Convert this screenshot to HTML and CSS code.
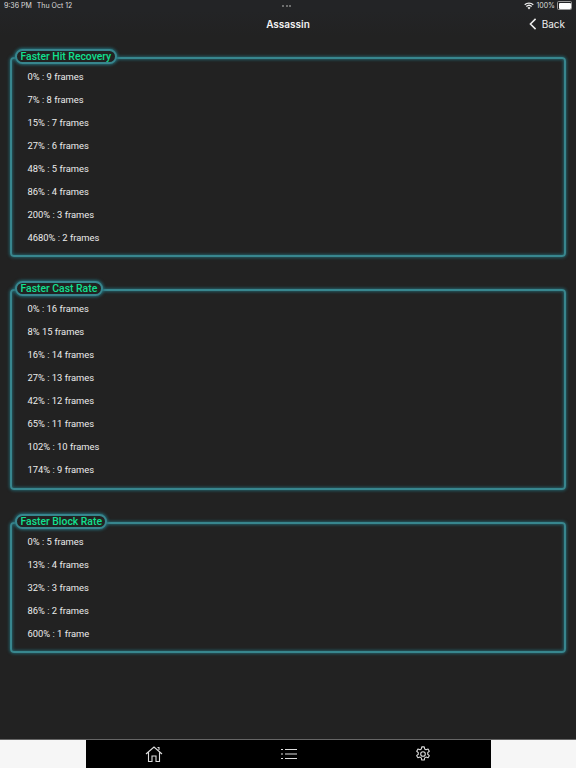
FILE: index.html
```html
<!doctype html>
<html lang="en-US">
<head>
	<meta charset="utf-8">
	<title>Assassin</title>
	<link rel="stylesheet" href="styles.css">
</head>
<body>
	<div class="app">
		<div class="status">
			<span>9:36 PM</span><span class="date">Thu Oct 12</span>
			<div class="dots"><b></b><b></b><b></b></div>
			<div class="status-r">
				<svg class="wifi" viewBox="0 0 16 12" width="10" height="8"><path d="M8 11.5 5.6 8.8a3.5 3.5 0 0 1 4.8 0zM4.5 7.6 3 6a7.2 7.2 0 0 1 10 0l-1.500 1.600a5 5 0 0 0-7 0zM1.900 4.900.4 3.300a11 11 0 0 1 15.200 0l-1.500 1.600a9 9 0 0 0-12.200 0z" fill="#eee"/></svg>
				<span>100%</span>
				<i class="batt"><b></b></i>
			</div>
		</div>
		<div class="nav">
			<span class="title">Assassin</span>
			<a class="back">
				<svg viewBox="0 0 9 14" width="8" height="12"><path d="M7.500 1 1.500 7l6 6" fill="none" stroke="#eee" stroke-width="1.800"/></svg>
				<span>Back</span>
			</a>
		</div>
		<div class="main">
			<div class="panel">
				<div class="tag">Faster Hit Recovery</div>
				<div class="row">0% : 9 frames</div>
				<div class="row">7% : 8 frames</div>
				<div class="row">15% : 7 frames</div>
				<div class="row">27% : 6 frames</div>
				<div class="row">48% : 5 frames</div>
				<div class="row">86% : 4 frames</div>
				<div class="row">200% : 3 frames</div>
				<div class="row">4680% : 2 frames</div>
			</div>
			<div class="panel">
				<div class="tag">Faster Cast Rate</div>
				<div class="row">0% : 16 frames</div>
				<div class="row">8% 15 frames</div>
				<div class="row">16% : 14 frames</div>
				<div class="row">27% : 13 frames</div>
				<div class="row">42% : 12 frames</div>
				<div class="row">65% : 11 frames</div>
				<div class="row">102% : 10 frames</div>
				<div class="row">174% : 9 frames</div>
			</div>
			<div class="panel">
				<div class="tag">Faster Block Rate</div>
				<div class="row">0% : 5 frames</div>
				<div class="row">13% : 4 frames</div>
				<div class="row">32% : 3 frames</div>
				<div class="row">86% : 2 frames</div>
				<div class="row">600% : 1 frame</div>
			</div>
		</div>
		<div class="tabs">
			<div class="tabs-in">
				<svg viewBox="0 0 18 18" width="18" height="18" fill="none" stroke="#ddd" stroke-width="1.100"><path d="M1 9 9 2l8 7M3.500 7.500V16.500H7V11h4v5.500h3.500V7.500M12.500 2.500h1.500v2.500"/></svg>
				<svg viewBox="0 0 16 12" width="16" height="12" fill="none" stroke="#ddd" stroke-width="1.200"><path d="M4 1.500h12M4 6h12M4 10.500h12M0 1.500h2M0 6h2M0 10.500h2"/></svg>
				<svg viewBox="0 0 18 18" width="16" height="16" fill="none" stroke="#ddd" stroke-width="1.200"><circle cx="9" cy="9" r="2.600"/><path d="M7.600 1h2.800l.5 2.400 1.500.9 2.300-.8 1.400 2.400-1.800 1.600v1.800l1.800 1.600-1.400 2.400-2.300-.8-1.500.9-.5 2.400H7.600l-.5-2.400-1.500-.9-2.300.8-1.400-2.400 1.800-1.600V7.500L1.900 5.900l1.400-2.400 2.300.8 1.500-.9z" stroke-linejoin="round"/></svg>
			</div>
		</div>
	</div>
</body>
</html>
```

FILE: styles.css
```css
html,body{margin:0;height:100%}
body{background:#222;color:#eee;font:9.400px/23px Roboto,"Liberation Sans",sans-serif;overflow:hidden}
.app{display:flex;flex-direction:column;height:768px}
.status{position:relative;display:flex;align-items:center;height:11px;padding:0 4px;font:7px/11px Inter,sans-serif;color:#ddd;background:#232426}
.status .date{margin-left:5px}
.dots{position:absolute;left:282px;top:5px;display:flex;gap:1.500px}
.dots b{width:2px;height:2px;border-radius:50%;background:#888}
.status-r{margin-left:auto;display:flex;align-items:center;gap:2px}
.batt{display:block;width:12px;height:6px;border:.5px solid #999;border-radius:1.500px;padding:.5px;box-sizing:content-box}
.batt b{display:block;width:100%;height:100%;background:#fff;border-radius:1px}
.nav{position:relative;display:flex;justify-content:center;align-items:center;height:25px;background:linear-gradient(#232426,#222);font:10px Inter,sans-serif}
.nav .title{font-weight:600;color:#f2f2f2}
.back{position:absolute;right:11px;top:0;height:25px;display:flex;align-items:center;gap:5px;font-size:10px}
.main{flex:1;display:flex;flex-direction:column;gap:32px;padding:20.900px 10px 0}
.panel{height:200.500px;box-sizing:border-box;border:2px solid #38868e;border-radius:4px;box-shadow:0 0 3px 1px #235a62,inset 0 0 3px 1px #235a62;padding:0 0 0 15.500px}
.panel:last-child{height:131.500px}
.row{height:23px;color:#ececec}
.tag{width:max-content;margin:-10px 0 1px -12.500px;padding:0 3.500px;height:15px;line-height:12px;box-sizing:border-box;border:2px solid #38868e;border-radius:8px;background:#222;color:#10e090;font-size:10.400px;font-weight:500;box-shadow:0 0 3px 1px #236a74}
.tabs{height:29px;background:#f6f6f6;display:flex;justify-content:center;border-top:1px solid #666;box-sizing:border-box}
.tabs-in{width:405px;background:#000;display:flex;justify-content:space-around;align-items:center}
```
